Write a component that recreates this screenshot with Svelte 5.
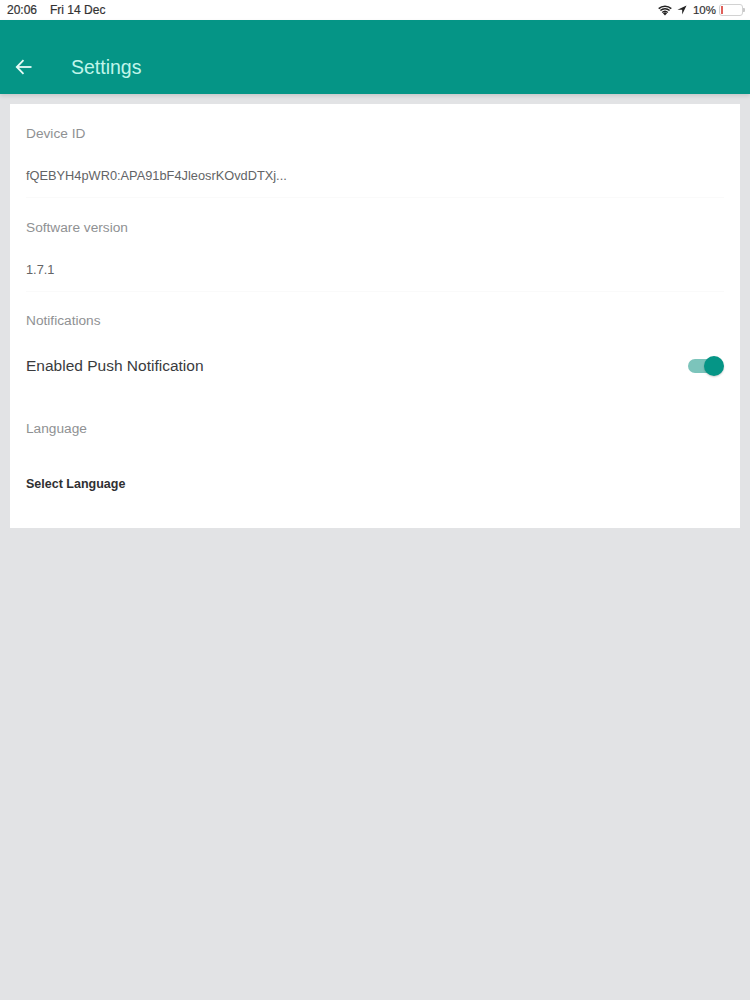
<script>
  const sections = [
    { label: "Device ID", value: "fQEBYH4pWR0:APA91bF4JleosrKOvdDTXj..." },
    { label: "Software version", value: "1.7.1" },
  ];

  let pushEnabled = true;
</script>

<div class="page">
  <div class="status">
    <div class="status-left">
      <span>20:06</span>
      <span>Fri 14 Dec</span>
    </div>
    <div class="status-right">
      <svg class="wifi" width="14" height="11" viewBox="0 0 14 11">
        <path d="M7 10.6 4.9 8.2a3 3 0 0 1 4.2 0z" fill="#222" />
        <path d="M3.7 6.9a4.9 4.9 0 0 1 6.6 0l-1 1.1a3.4 3.4 0 0 0-4.6 0z" fill="#222" />
        <path d="M1.9 5A7.5 7.5 0 0 1 12.100 5l-1 1.100a6 6 0 0 0-8.200 0z" fill="#222" />
        <path d="M0.200 3.100A10 10 0 0 1 13.800 3.100l-1 1.100a8.500 8.500 0 0 0-11.600 0z" fill="#222" />
      </svg>
      <svg class="arrow" width="10" height="10" viewBox="0 0 11 11">
        <path d="M10.500 0.500 0.500 5.200H5.700V10.500z" fill="#222" />
      </svg>
      <span class="percent">10%</span>
      <div class="battery">
        <div class="battery-body"><div class="battery-level"></div></div>
        <div class="battery-cap"></div>
      </div>
    </div>
  </div>

  <header class="toolbar">
    <svg class="back" width="18" height="18" viewBox="0 0 18 18" fill="none" stroke="#e6fbf6" stroke-width="1.800">
      <path d="M16.500 9H1.800" />
      <path d="M8.500 2.200 1.800 9l6.700 6.800" />
    </svg>
    <h1>Settings</h1>
  </header>

  <main class="card">
    {#each sections as section}
      <section class="block">
        <div class="label">{section.label}</div>
        <div class="value">{section.value}</div>
      </section>
    {/each}

    <section class="notifications">
      <div class="label">Notifications</div>
      <div class="toggle-row">
        <span>Enabled Push Notification</span>
        <div class="toggle" class:on={pushEnabled}>
          <div class="track"></div>
          <div class="knob"></div>
        </div>
      </div>
    </section>

    <section class="language">
      <div class="label">Language</div>
      <div class="select">Select Language</div>
    </section>
  </main>
</div>

<style>
  :global(body) {
    margin: 0;
    background: #e2e3e5;
  }

  .page {
    height: 1000px;
    background: #e2e3e5;
    font-family: "Liberation Sans", Arial, sans-serif;
    overflow: hidden;
  }

  .status {
    height: 20px;
    background: #fff;
    display: flex;
    justify-content: space-between;
    align-items: center;
    padding: 0 5px 0 7px;
    font-size: 11.500px;
    color: #333;
  }

  .status-left {
    display: flex;
    gap: 13px;
    font-size: 12px;
    -webkit-text-stroke: 0.2px #333;
  }

  .status-right {
    display: flex;
    align-items: center;
    gap: 5px;
    -webkit-text-stroke: 0.2px #333;
  }

  .percent {
    margin-left: 1px;
    margin-right: -2px;
  }

  .battery {
    display: flex;
    align-items: center;
  }

  .battery-body {
    width: 20px;
    height: 8px;
    border: 1px solid #d2d2d2;
    border-radius: 3px;
    padding: 1px;
    box-sizing: content-box;
  }

  .battery-level {
    width: 2px;
    height: 8px;
    background: #e0605a;
  }

  .battery-cap {
    width: 2px;
    height: 4px;
    background: #c9c9c9;
    border-radius: 0 1px 1px 0;
  }

  .toolbar {
    height: 74px;
    background: #059586;
    display: flex;
    align-items: center;
    padding: 20px 15px 0;
    box-sizing: border-box;
    gap: 38px;
    box-shadow: 0 2px 4px rgba(0, 0, 0, 0.12);
    position: relative;
  }

  .toolbar h1 {
    margin: 0;
    font-size: 19.500px;
    font-weight: 400;
    color: #c0f5ea;
  }

  .card {
    margin: 10px 10px 0;
    height: 424px;
    background: #fff;
    padding: 0 16px;
    box-sizing: border-box;
  }

  .block {
    height: 94px;
    box-sizing: border-box;
    border-bottom: 1px solid #fafafa;
    padding-top: 22px;
  }

  .label {
    font-size: 13.700px;
    line-height: 16px;
    color: #8f9193;
  }

  .value {
    margin-top: 27px;
    font-size: 12.800px;
    line-height: 14px;
    color: #636466;
  }

  .notifications {
    padding-top: 21px;
  }

  .toggle-row {
    display: flex;
    justify-content: space-between;
    align-items: center;
    margin-top: 27px;
    font-size: 15.500px;
    line-height: 20px;
    color: #3a3b3d;
  }

  .toggle {
    position: relative;
    width: 36px;
    height: 20px;
  }

  .track {
    position: absolute;
    left: 0;
    top: 3px;
    width: 34px;
    height: 14px;
    border-radius: 7px;
    background: #7cc4bb;
  }

  .knob {
    position: absolute;
    right: 0;
    top: 0;
    width: 20px;
    height: 20px;
    border-radius: 50%;
    background: #059586;
    box-shadow: 0 1px 2px rgba(0, 0, 0, 0.2);
  }

  .language {
    padding-top: 45px;
  }

  .select {
    margin-top: 39px;
    font-size: 12.500px;
    line-height: 16px;
    font-weight: 700;
    color: #2f3032;
  }
</style>
